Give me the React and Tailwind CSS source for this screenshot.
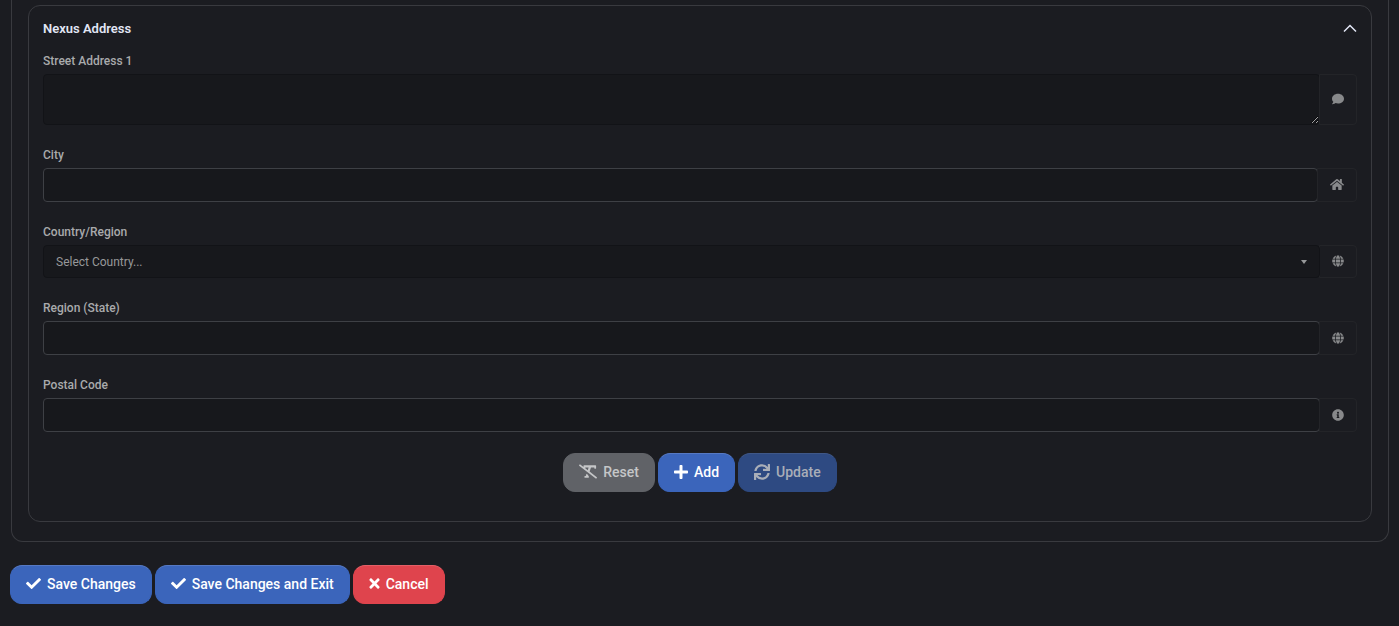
import React, { useState } from "react";
import {
  FaComment,
  FaHome,
  FaGlobe,
  FaInfoCircle,
  FaRemoveFormat,
  FaPlus,
  FaCheck,
  FaTimes,
  FaSync,
} from "react-icons/fa";

const labelClass = "block mb-[3px] h-5 text-xs leading-5 font-medium text-[#a9aaac]";
const inputClass =
  "min-w-0 flex-1 h-[34px] rounded border border-[#3e4045] bg-[#17181c] px-3 text-xs text-[#d5d6d8] outline-none";
const buttonBase =
  "flex h-[39px] items-center gap-1.5 rounded-xl border px-[15px] pb-0.5 text-sm font-medium";
const primary = "bg-[#3b65bb] border-[#3b65bb] border-t-[#5679c3] text-white";

function Field({ id, label, icon, children }) {
  return (
    <div className="mb-5">
      <label htmlFor={id} className={labelClass}>{label}</label>
      <div className="flex items-stretch">
        {children}
        <span className="-ml-px flex items-center rounded-r border border-[#232428] px-3 pb-px text-xs text-[#88898b]">
          {icon}
        </span>
      </div>
    </div>
  );
}

export default function App() {
  const [open, setOpen] = useState(true);
  return (
    <main className="min-h-screen bg-[#1b1c21] px-2.5 pb-[22px] font-['Roboto',sans-serif]">
      <form onSubmit={(e) => e.preventDefault()}>
        <section className="ml-px rounded-b-xl border border-t-0 border-[#393a3f] px-4 pt-[5px] pb-[19px]">
          <div className="rounded-xl border border-[#393a3f] px-3.5 pt-[11px] pb-[29px]">
            <button
              type="button"
              aria-expanded={open}
              onClick={() => setOpen(!open)}
              className="mb-2.5 flex h-6 w-full items-center justify-between text-[13px] font-semibold text-[#e2e6f5]"
            >
              Nexus Address
              <svg viewBox="0 0 14 10" className={open ? "h-2.5 w-3.5" : "h-2.5 w-3.5 rotate-180"} fill="none" stroke="currentColor" strokeWidth="1.5">
                <path d="M1 7.5 7 1.5l6 6" />
              </svg>
            </button>
            {open && (
              <>
                <Field id="street" label="Street Address 1" icon={<FaComment />}>
                  <textarea id="street" className="h-[51px] min-w-0 flex-1 resize-y rounded border border-[#121317] bg-[#17181c] px-3 py-1.5 text-xs text-[#d5d6d8] outline-none" />
                </Field>
                <Field id="city" label="City" icon={<FaHome className="h-[13px] w-3.5" />}>
                  <input id="city" type="text" className={inputClass} />
                </Field>
                <Field id="country" label="Country/Region" icon={<FaGlobe />}>
                  <div className="relative min-w-0 flex-1">
                    <select id="country" className="block h-[33px] w-full appearance-none rounded border border-[#121317] bg-[#17181c] px-3 text-xs text-[#97989a] outline-none">
                      <option>Select Country...</option>
                    </select>
                    <svg viewBox="0 0 6 4" className="pointer-events-none absolute top-[15px] right-[13px] h-1 w-1.5" fill="#97989a">
                      <path d="M0 0h6L3 4z" />
                    </svg>
                  </div>
                </Field>
                <Field id="region" label="Region (State)" icon={<FaGlobe />}>
                  <input id="region" type="text" className={inputClass} />
                </Field>
                <Field id="postal" label="Postal Code" icon={<FaInfoCircle />}>
                  <input id="postal" type="text" className={inputClass} />
                </Field>
                <div className="flex justify-center gap-[3px] pt-px">
                  <button type="button" disabled className={`${buttonBase} border-[#606267] bg-[#606267] text-[#c5c6c8]`}>
                    <FaRemoveFormat className="h-[15px] w-[18px]" />
                    Reset
                  </button>
                  <button type="button" className={`${buttonBase} ${primary}`}>
                    <FaPlus className="h-4 w-3.5" />
                    Add
                  </button>
                  <button type="button" disabled className={`${buttonBase} border-[#2e4a82] border-t-[#3f5787] bg-[#2e4a82] text-[#a9aeb8]`}>
                    <FaSync className="h-4 w-4" />
                    Update
                  </button>
                </div>
              </>
            )}
          </div>
        </section>
        <div className="mt-[23px] flex gap-[3px]">
          <button type="submit" className={`${buttonBase} ${primary}`}>
            <FaCheck className="h-[15px] w-[15px]" />
            Save Changes
          </button>
          <button type="submit" className={`${buttonBase} ${primary}`}>
            <FaCheck className="h-[15px] w-[15px]" />
            Save Changes and Exit
          </button>
          <button type="button" className={`${buttonBase} border-[#df444d] border-t-[#e45f67] bg-[#df444d] text-white`}>
            <FaTimes className="h-[15px] w-[11px]" />
            Cancel
          </button>
        </div>
      </form>
    </main>
  );
}
